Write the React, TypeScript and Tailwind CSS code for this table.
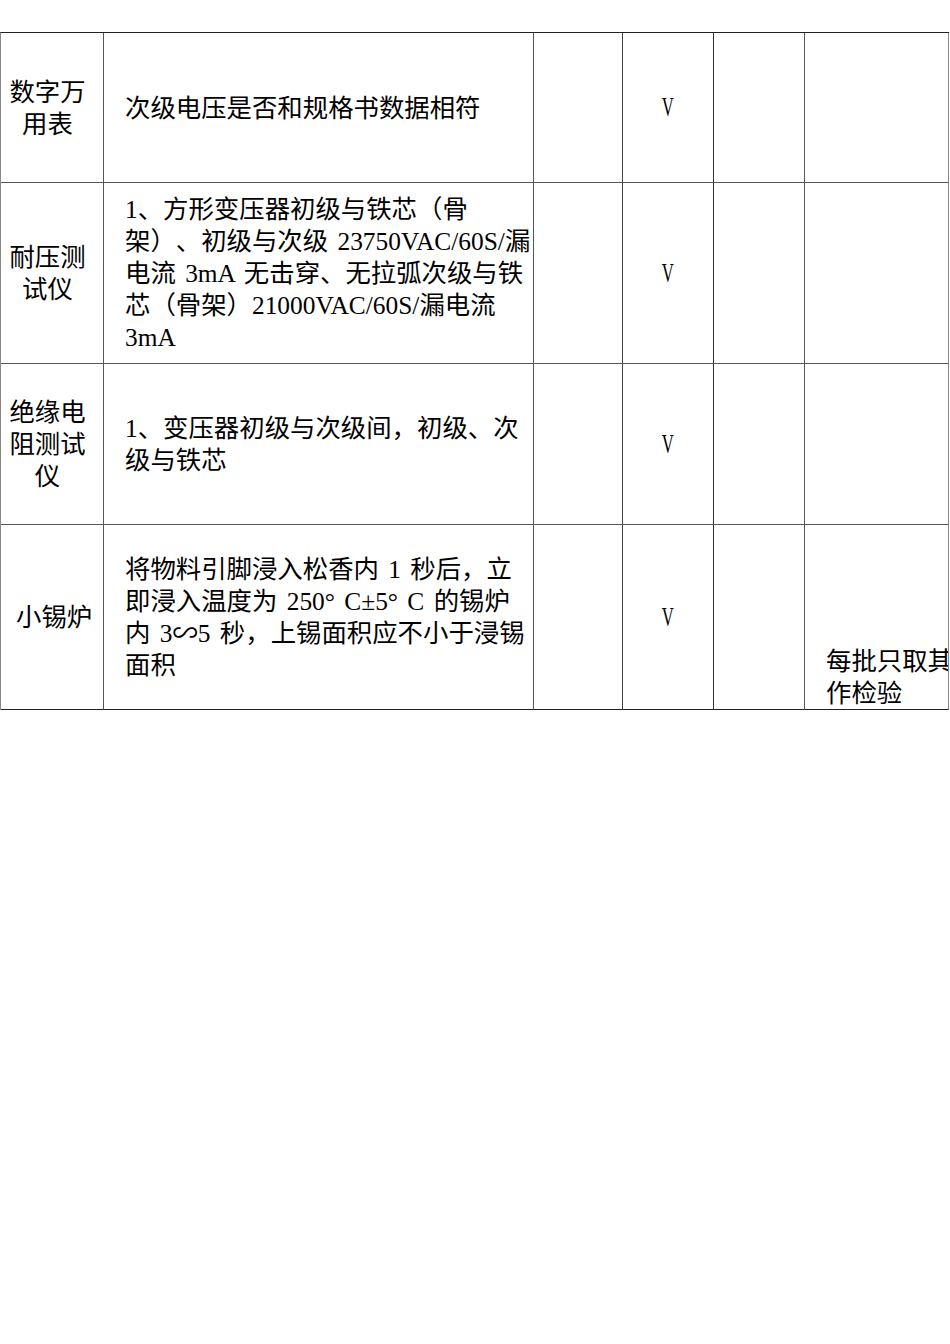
import React from "react";

const F = "font-['Liberation_Serif','Noto_Sans_CJK_SC',serif]";

function Lines({ lines }: { lines: string[] }) {
  return (
    <div className="whitespace-nowrap [word-spacing:3px]">
      {lines.map((l, i) => (
        <div key={i}>{l}</div>
      ))}
    </div>
  );
}

function V() {
  return (
    <span className="inline-block scale-x-[0.62] font-['Liberation_Serif',serif] text-[27px] leading-none">V</span>
  );
}

const rows = [
  {
    name: ["数字万", "用表"],
    namePad: "",
    text: ["次级电压是否和规格书数据相符"],
  },
  {
    name: ["耐压测", "试仪"],
    namePad: "",
    text: [
      "1、方形变压器初级与铁芯（骨",
      "架）、初级与次级 23750VAC/60S/漏",
      "电流 3mA 无击穿、无拉弧次级与铁",
      "芯（骨架）21000VAC/60S/漏电流",
      "3mA",
    ],
  },
  {
    name: ["绝缘电", "阻测试", "仪"],
    namePad: "",
    text: ["1、变压器初级与次级间，初级、次", "级与铁芯"],
  },
  {
    name: ["小锡炉"],
    namePad: "pl-[7px]",
    text: [
      "将物料引脚浸入松香内 1 秒后，立",
      "即浸入温度为 250° C±5° C 的锡炉",
      "内 3∽5 秒，上锡面积应不小于浸锡",
      "面积",
    ],
  },
];

export default function App() {
  return (
    <div className={`w-[950px] h-[1344px] bg-white overflow-hidden text-black text-[25.4px] leading-[32px] [text-spacing-trim:space-all] ${F}`}>
      <div className="mt-[32px] w-[949px] grid grid-cols-[103px_430px_89px_91px_91px_144px] grid-rows-[150px_181px_161px_185px] border-t border-l border-t-[#222] border-l-[#888]">
        {rows.map((r, i) => {
          const last = i === rows.length - 1;
          const bb = last ? "border-b border-b-[#222]" : "border-b border-b-[#555]";
          return (
            <React.Fragment key={i}>
              <div className={`border-r border-r-[#555] ${bb} flex items-center pl-[8px]`}>
                <div className={`w-[77px] text-center ${r.namePad}`}>
                  {r.name.map((n, j) => (
                    <div key={j} className="whitespace-nowrap">{n}</div>
                  ))}
                </div>
              </div>
              <div className={`border-r border-r-[#555] ${bb} flex items-center pl-[21px]`}>
                <Lines lines={r.text} />
              </div>
              <div className={`border-r border-r-[#444] ${bb}`} />
              <div className={`border-r border-r-[#333] ${bb} flex items-center justify-center`}>
                <V />
              </div>
              <div className={`border-r border-r-[#555] ${bb}`} />
              <div className={`border-r border-r-[#888] ${bb} overflow-hidden`}>
                {last && (
                  <div className="h-full flex flex-col justify-end pl-[21px] whitespace-nowrap">
                    <div>每批只取其</div>
                    <div>作检验</div>
                  </div>
                )}
              </div>
            </React.Fragment>
          );
        })}
      </div>
    </div>
  );
}
